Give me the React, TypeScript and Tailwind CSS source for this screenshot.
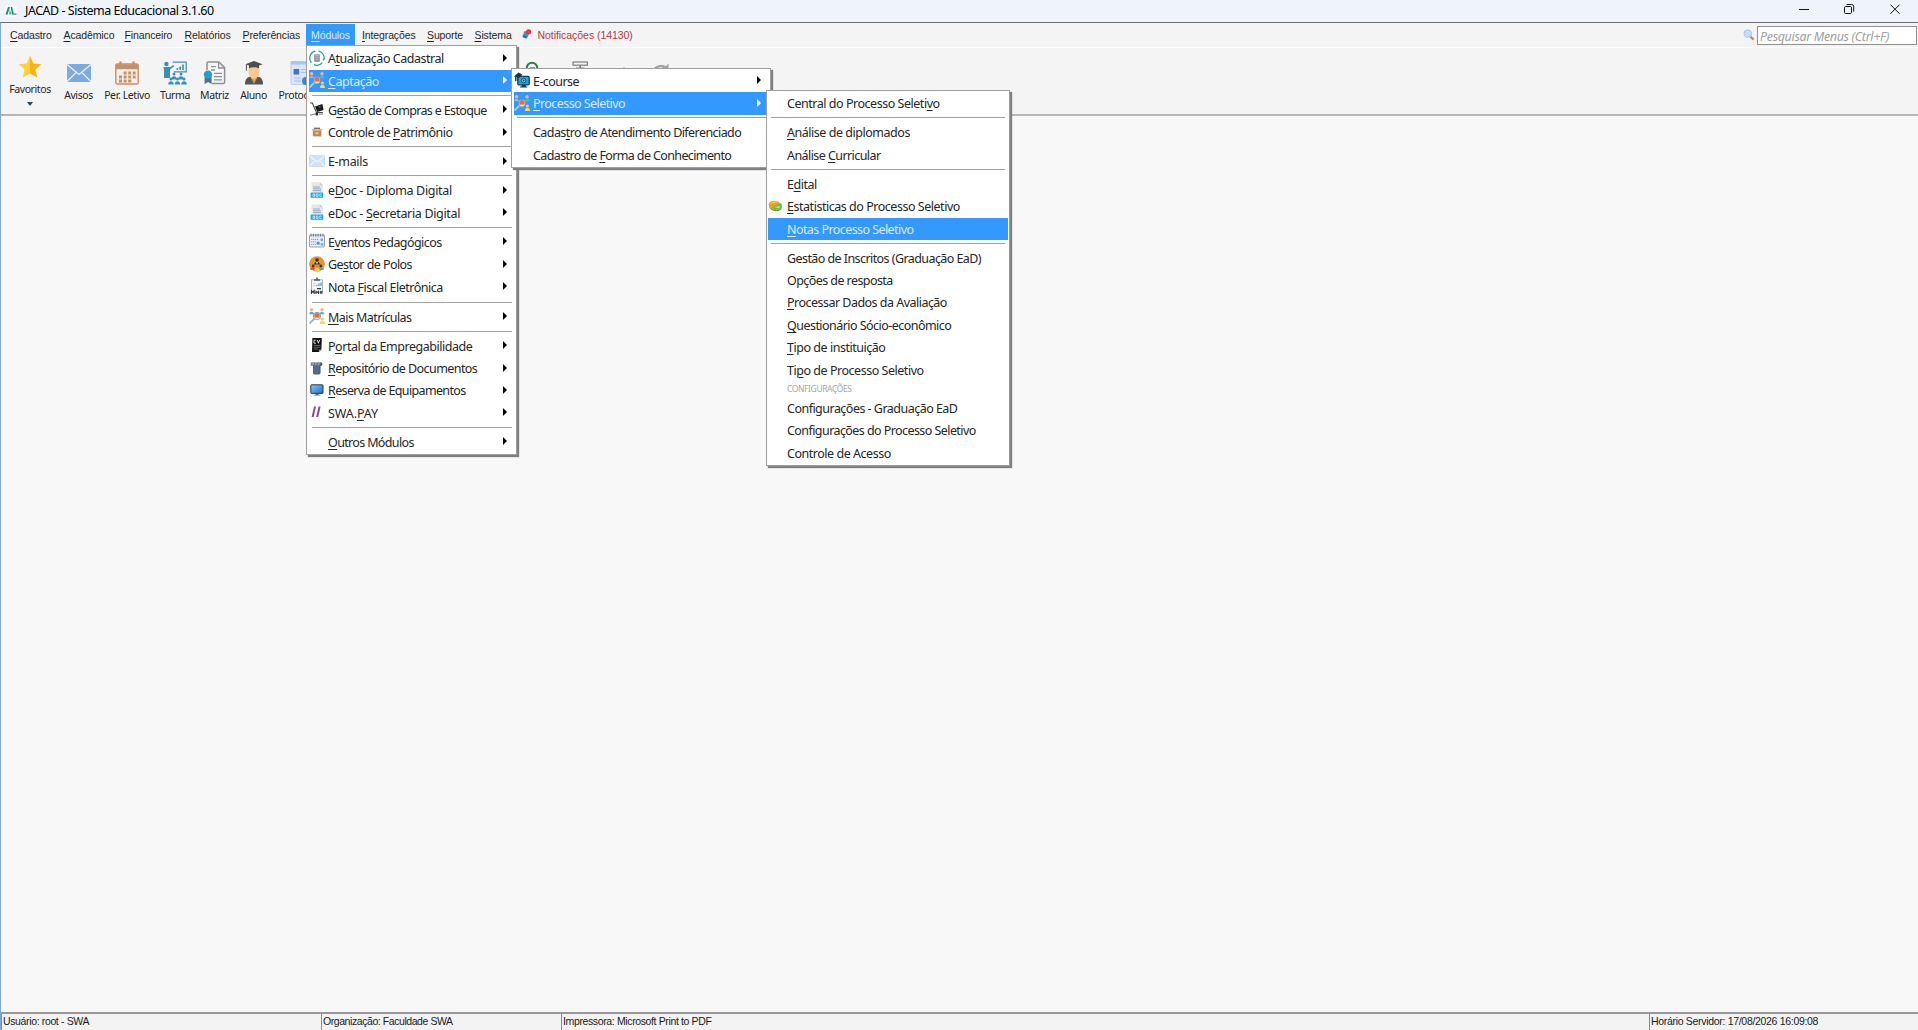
import type { ReactNode } from "react";

type Entry =
  | { kind?: "item"; label: string; icon?: ReactNode; arrow?: boolean; active?: boolean; tall?: boolean; track?: string }
  | { kind: "sep" }
  | { kind: "heading"; label: string };

/* "&" marks the mnemonic: the letter after it is underlined */
const Mnemonic = ({ text }: { text: string }) => {
  const at = text.indexOf("&");
  if (at < 0) return <>{text}</>;
  return (
    <>
      {text.slice(0, at)}
      <span className="underline decoration-1 underline-offset-2">{text[at + 1]}</span>
      {text.slice(at + 2)}
    </>
  );
};

const svg = "block size-4";

const RefreshDbIcon = () => (
  <svg viewBox="0 0 16 16" className={svg}>
    <path d="M9.4 .9A7.2 7.2 0 0 1 15 9.4M13.4 12.7A7.2 7.2 0 0 1 5 14.6M2.400 12.600A7.200 7.200 0 0 1 6.400 1" fill="none" stroke="#35a58c" strokeWidth="1.300" />
    <path d="M15.900 8.400l-1.100 2.600-1.500-2z" fill="#35a58c" />
    <path d="M5 5h6v6H5z" fill="#8d979b" />
    <ellipse cx="8" cy="5" rx="3" ry="1.200" fill="#aab3b6" />
    <ellipse cx="8" cy="11" rx="3" ry="1.100" fill="#8d979b" />
    <path d="M5 7.200h6M5 9.200h6" stroke="#c6ced0" strokeWidth=".6" />
  </svg>
);

const PeopleIcon = ({ blue }: { blue?: boolean }) => (
  <svg viewBox="0 0 16 16" className={svg}>
    <circle cx="2.6" cy="1.8" r="1.7" fill="#f6b48b" />
    <path d="M.2 6.200c0-3.400 4.800-3.400 4.800 0z" fill={blue ? "#3fa9dc" : "#8db9dc"} />
    <circle cx="13" cy="1.8" r="1.7" fill="#f6b48b" />
    <path d="M10.600 6.200c0-3.400 4.800-3.400 4.800 0z" fill="#42bfd2" />
    <circle cx="13.400" cy="11" r="1.600" fill="#f7c46f" />
    <path d="M10.800 16c0-4.200 5.200-4.200 5.200 0z" fill="#fbd84f" />
    <path d="M5.400 10.600L.6 15.400" stroke={blue ? "#7db8dd" : "#a9d0f2"} strokeWidth="1.800" />
    <circle cx="8" cy="8" r="3.700" fill="#dfe6ee" stroke="#5f7890" strokeWidth=".7" />
    <circle cx="8" cy="7.800" r="2.700" fill="#e0703c" />
    <path d="M5.500 10.400c1-1.300 4-1.300 5 0-1.300 1.300-3.700 1.300-5 0z" fill="#f5dccb" />
  </svg>
);

const CartIcon = () => (
  <svg viewBox="0 0 16 16" className={svg}>
    <path d="M1 2h2.4l4 9.5h6.4" fill="none" stroke="#4b4b4b" strokeWidth="1.2" />
    <path d="M6 5.500l7.400-2.600 1.200 6.200-6.400 2z" fill="#1b1b1b" />
    <path d="M9.600 4.400l1 2.200 1.600-.8" fill="none" stroke="#777" strokeWidth=".7" />
    <circle cx="7.800" cy="13" r="1.500" fill="#222" />
    <path d="M1 14.200l5-1.200M10 13h4" stroke="#777" strokeWidth="1" />
  </svg>
);

const BoxIcon = () => (
  <svg viewBox="0 0 16 16" className={svg}>
    <path d="M3.800 6.400h8.600v6H3.800z" fill="#b98a5e" />
    <path d="M3.800 6.800L2.600 5l5 .2.500 1.400.500-1.400 5-.2-1.200 1.800z" fill="#d6ad82" />
    <path d="M4.800 3.600h6.400v1.500H4.800z" fill="#8c6a4c" />
    <path d="M6.500 8.200h3v2h-3z" fill="#e4c7a5" />
  </svg>
);

const MailIcon = () => (
  <svg viewBox="0 0 16 16" className={svg}>
    <rect x=".3" y="2.800" width="15.400" height="10.600" fill="#cfe2f8" stroke="#aac8ea" strokeWidth=".5" />
    <path d="M.5 3l7.500 6 7.500-6M.5 13.200l5-5.400M15.500 13.200l-5-5.400" fill="none" stroke="#fff" strokeWidth="1" />
  </svg>
);

const DocIcon = () => (
  <svg viewBox="0 0 16 16" className={svg}>
    <path d="M2.400.3h8.400l3 3V11H2.400z" fill="#e6e9e4" />
    <path d="M10.800.3v3h3z" fill="#c7cec2" />
    <path d="M4 5h7M4 6.800h8M4 8.600h8" stroke="#8ba3cc" strokeWidth=".9" />
    <rect x="1.600" y="10.600" width="12.600" height="5.200" fill="#18a6ee" />
    <path d="M4 12h1.600v2.400H4zM7.200 12h1.800v2.400H7.200zM12.600 12h-1.800v2.400h1.800" fill="none" stroke="#d9f0fd" strokeWidth=".8" />
  </svg>
);

const EventsIcon = () => (
  <svg viewBox="0 0 16 16" className={svg}>
    <rect x=".5" y="2" width="15" height="12" rx="1" fill="#e7edf5" stroke="#8c98ab" strokeWidth=".9" />
    <path d="M2 .6v3M4.400.6v3M6.800.6v3M9.200.6v3M11.600.6v3M14 .6v3" stroke="#66728a" strokeWidth=".9" />
    <path d="M2 6.400h8M2 8.800h5M2 11.400h5" stroke="#8fa2bd" strokeWidth="1" strokeDasharray="1.300 .7" />
    <circle cx="12.800" cy="6.800" r="1.400" fill="#63a7da" />
    <circle cx="9.200" cy="10.200" r="1.600" fill="#4f94cf" />
    <circle cx="13" cy="11.200" r="1.500" fill="#74b2e0" />
  </svg>
);

const PolosIcon = () => (
  <svg viewBox="0 0 16 16" className={svg}>
    <circle cx="8" cy="8" r="7.800" fill="#e2952f" />
    <circle cx="8" cy="4" r="1.800" fill="#3b2a20" />
    <path d="M5.200 8.600c0-3.800 5.600-3.800 5.600 0z" fill="#2a2f3a" />
    <path d="M7.200 6h1.600L8 8.400z" fill="#fff" />
    <circle cx="4.200" cy="10" r="1.400" fill="#4a3222" />
    <circle cx="11.800" cy="10" r="1.400" fill="#4a3222" />
    <path d="M1 13.800c.2-3.400 5.400-3.400 6 0z" fill="#e0443a" />
    <path d="M9.400 13.800c.4-3.400 5.400-3.400 5.600 0z" fill="#5a8fe0" />
    <path d="M5.200 14c0-3 5.600-3 5.600 0l-1 1.700H6.200z" fill="#f4d13a" />
  </svg>
);

const InvoiceIcon = () => (
  <svg viewBox="0 0 16 18" className="block h-[18px] w-4">
    <rect x="2.500" y="2.800" width="11" height="12.600" fill="#f3f5f7" stroke="#9aa2a8" strokeWidth=".8" />
    <path d="M5 2.200h6v1.600H5zM7.200.6h1.600v2H7.200z" fill="#555f66" />
    <path d="M10 9V6.500M12 9V5.500M8 9V7.800" stroke="#3d9be0" strokeWidth="1.200" />
    <path d="M4.200 6.500h2.400M4.200 8.500h2.400" stroke="#9ec4e4" strokeWidth=".7" />
    <path d="M2.400 17v-3.400l1.400 1.600 1.400-1.600V17M7 17v-2.600l1.200 1 1.200-1V17M11 14l2.400 2.600M13.400 14L11 16.600M8 11.600h4" fill="none" stroke="#343a40" strokeWidth="1.100" />
  </svg>
);

const CvIcon = () => (
  <svg viewBox="0 0 16 16" className={svg}>
    <path d="M3.400 1h9.400l-.4 11.400L9.800 15H3z" fill="#111" />
    <path d="M6.900 3.200H5v3h1.900M8.400 3l1 3.200 1.200-3.200" fill="none" stroke="#eee" strokeWidth=".9" />
    <path d="M4.800 8.400h6.600M4.800 10.200h6.600M4.800 12h4" stroke="#999" strokeWidth=".6" />
    <path d="M9.800 15v-2.600h2.600z" fill="#999" />
  </svg>
);

const ScrollIcon = () => (
  <svg viewBox="0 0 16 16" className={svg}>
    <path d="M4 3h7.600v9.600c0 1-.6 1.800-1.600 1.800H5.400c-1 0-1.400-1-1.400-2z" fill="#4d6587" />
    <path d="M1.800 2.400h10v3.400h-10z" fill="#63799a" />
    <path d="M11.400 2.200c2.600 0 2.600 3.800 0 3.800z" fill="#3b5375" />
    <path d="M3 4h2M6 4h1.600M9 4h1.400" stroke="#c5d0df" strokeWidth=".8" />
    <path d="M5.600 8h4M5.600 10h4M5.600 12h3" stroke="#6b82a4" strokeWidth=".6" />
  </svg>
);

const MonitorIcon = () => (
  <svg viewBox="0 0 16 16" className={svg}>
    <defs>
      <linearGradient id="screen" x1="0" y1="0" x2="1" y2="1">
        <stop offset="0" stopColor="#8cc8f7" />
        <stop offset="1" stopColor="#1c6fc9" />
      </linearGradient>
    </defs>
    <rect x="1.800" y="2.800" width="12.200" height="8.600" rx=".6" fill="url(#screen)" stroke="#27384d" strokeWidth="1" />
    <path d="M6.600 11.600h2.800v1.200H6.600z" fill="#3b4654" />
    <path d="M4.800 12.800h6.400v.9H4.800z" fill="#7b8794" />
  </svg>
);

const SwaPayIcon = () => (
  <svg viewBox="0 0 16 16" className={svg}>
    <path d="M5 2.400h2L4.600 13h-2zM9.600 2.400h2L9.200 13h-2z" fill="#8d4696" />
  </svg>
);

const EcourseIcon = () => (
  <svg viewBox="0 0 16 16" className={svg}>
    <rect x="3.800" y="4.400" width="11.400" height="8.400" rx="1" fill="#1fa5d8" stroke="#123c5c" strokeWidth="1.300" />
    <path d="M0 4.600L4.400.6l4 2-3.600 3.600z" fill="#16344c" />
    <path d="M1.600 5v4.200M3.200 6.200v2.600" stroke="#16344c" strokeWidth="1.100" />
    <circle cx="9.600" cy="8.600" r="2.300" fill="#5cc6ea" stroke="#123c5c" strokeWidth=".8" />
    <path d="M9 7.400l1.800 1.200L9 9.800z" fill="#123c5c" />
    <path d="M7.600 13h4.200v1.400H7.600zM6 14.400h7.400v1.200H6z" fill="#123c5c" />
  </svg>
);

const StatsIcon = () => (
  <svg viewBox="0 0 16 16" className={svg}>
    <ellipse cx="7.400" cy="8.600" rx="6.400" ry="4.600" fill="#7d8a2a" transform="rotate(12 7.400 8.600)" />
    <ellipse cx="7" cy="7.400" rx="6.400" ry="4.500" fill="#e9a41f" transform="rotate(12 7 7.400)" />
    <path d="M5 8.600l8.400-2.200c1.400 3.600-1.600 6-5 6.200-2 0-3.400-1.400-3.400-4z" fill="#6cc04a" />
    <path d="M5.600 8l7.600-2.800c.4.800.5 1.600.3 2.400z" fill="#3db8a6" />
    <path d="M6.400 9l6.400-1-2 2.600z" fill="#c4e86e" />
    <path d="M2.400 6c1.400-1.800 4.200-2.200 6-1.800" fill="none" stroke="#f9d367" strokeWidth="1" />
  </svg>
);

const loose = "tracking-[-0.33px]";
const mid = "tracking-[-0.47px]";
const tight = "tracking-[-0.57px]";
const tighter = "tracking-[-0.65px]";

const modules: Entry[] = [
  { label: "A&tualização Cadastral", icon: <RefreshDbIcon />, arrow: true, track: mid },
  { label: "&Captação", icon: <PeopleIcon />, arrow: true, active: true, track: mid },
  { kind: "sep" },
  { label: "G&estão de Compras e Estoque", icon: <CartIcon />, arrow: true, track: tighter },
  { label: "Controle de &Patrimônio", icon: <BoxIcon />, arrow: true },
  { kind: "sep" },
  { label: "E-mails", icon: <MailIcon />, arrow: true, track: loose },
  { kind: "sep" },
  { label: "e&Doc - Diploma Digital", icon: <DocIcon />, arrow: true, track: loose },
  { label: "eDoc - &Secretaria Digital", icon: <DocIcon />, arrow: true, track: loose },
  { kind: "sep" },
  { label: "E&ventos Pedagógicos", icon: <EventsIcon />, arrow: true },
  { label: "Ge&stor de Polos", icon: <PolosIcon />, arrow: true },
  { label: "Nota &Fiscal Eletrônica", icon: <InvoiceIcon />, arrow: true, tall: true, track: mid },
  { kind: "sep" },
  { label: "&Mais Matrículas", icon: <PeopleIcon blue />, arrow: true },
  { kind: "sep" },
  { label: "P&ortal da Empregabilidade", icon: <CvIcon />, arrow: true, track: mid },
  { label: "&Repositório de Documentos", icon: <ScrollIcon />, arrow: true },
  { label: "&Reserva de Equipamentos", icon: <MonitorIcon />, arrow: true, track: tighter },
  { label: "SWA.&PAY", icon: <SwaPayIcon />, arrow: true, track: "tracking-[-0.1px]" },
  { kind: "sep" },
  { label: "&Outros Módulos", arrow: true, track: tighter },
];

const captacao: Entry[] = [
  { label: "E-course", icon: <EcourseIcon />, arrow: true },
  { label: "&Processo Seletivo", icon: <PeopleIcon />, arrow: true, active: true },
  { kind: "sep" },
  { label: "Cadas&tro de Atendimento Diferenciado" },
  { label: "Cadastro de &Forma de Conhecimento", track: "tracking-[-0.62px]" },
];

const processo: Entry[] = [
  { label: "Central do Processo Seleti&vo", track: mid },
  { kind: "sep" },
  { label: "&Análise de diplomados", track: mid },
  { label: "Análise &Curricular" },
  { kind: "sep" },
  { label: "E&dital", track: mid },
  { label: "&Estatisticas do Processo Seletivo", icon: <StatsIcon />, track: mid },
  { label: "&Notas Processo Seletivo", active: true },
  { kind: "sep" },
  { label: "Gestão de Inscritos (Graduação EaD)" },
  { label: "Opções de resposta" },
  { label: "&Processar Dados da Avaliação", track: "tracking-[-0.52px]" },
  { label: "&Questionário Sócio-econômico", track: "tracking-[-0.54px]" },
  { label: "&Tipo de instituição", track: mid },
  { label: "Ti&po de Processo Seletivo", track: mid },
  { kind: "heading", label: "CONFIGURAÇÕES" },
  { label: "Configurações - Graduação EaD", track: "tracking-[-0.52px]" },
  { label: "Configurações do Processo Seletivo" },
  { label: "Controle de Acesso", track: mid },
];

const PopupMenu = ({ entries, className }: { entries: Entry[]; className: string }) => (
  <div className={`absolute border border-[#a0a0a0] bg-white px-px shadow-[2px_2px_1px_#808080] ${className}`}>
    {entries.map((e, i) => {
      if (e.kind === "sep")
        return (
          <div key={i} className="h-[6.7px] px-[3px] pt-[2.400px]">
            <div className="h-px bg-[#a0a0a0]" />
          </div>
        );
      if (e.kind === "heading")
        return (
          <div key={i} className="h-[15.9px] pl-[19px] pt-px text-[8.5px] leading-[13px] tracking-[-0.4px] text-[#a5a5a5]">
            {e.label}
          </div>
        );
      return (
        <div
          key={i}
          className={`flex items-center pr-2 ${e.tall ? "h-[23.4px]" : "h-[22.4px]"} ${
            e.active ? "bg-[#3399ff] text-[#dcebfb]" : "text-[#262626]"
          }`}
        >
          <span className="mr-[3px] w-4 shrink-0 -translate-y-px">{e.icon}</span>
          <span className={`grow whitespace-nowrap pt-px text-[12.5px] leading-4 ${e.track ?? tight}`}>
            <Mnemonic text={e.label} />
          </span>
          {e.arrow && (
            <span
              className={`size-0 -translate-y-px border-y-4 border-l-4 border-y-transparent ${
                e.active ? "border-l-white" : "border-l-black"
              }`}
            />
          )}
        </div>
      );
    })}
  </div>
);

const TitleBar = () => (
  <header className="flex h-[22px] items-center bg-[#eff4fb] pl-[5px]">
    <span className="flex size-3 items-center justify-center rounded-sm bg-white">
      <svg viewBox="0 0 12 12" className="size-3">
        <path d="M3 2h2L2.600 9.600H.4zM5.600 2h1.600L9 9.600H7z" fill="#1f8f7c" />
        <path d="M4.800 4.600l1.800 5H4z" fill="#36b79f" />
        <path d="M8.600 8.600h3v1h-3z" fill="#555" />
      </svg>
    </span>
    <h1 className="ml-2 grow whitespace-nowrap text-[12.5px] leading-5 tracking-[-0.48px] text-black">
      JACAD - Sistema Educacional 3.1.60
    </h1>
    <svg viewBox="0 0 110 22" className="mr-[13px] h-[22px] w-[110px]" fill="none" stroke="#111" strokeWidth="1">
      <path d="M4 9.500h10" />
      <rect x="49.500" y="6.500" width="7" height="7" rx="1.200" />
      <path d="M51.500 4.500h5.200a2 2 0 0 1 2 2v5.200" />
      <path d="M95.400 4.600l9.200 9.200M104.600 4.600l-9.200 9.200" />
    </svg>
  </header>
);

const MenuBar = () => (
  <nav className="flex h-[25px] items-center border-b border-white bg-[#f4f4f4] pl-[9px] pr-px font-['Liberation_Sans',Arial,sans-serif] text-[10.5px] leading-3 tracking-[-0.12px] text-[#1f1f1f]">
    <span className="w-[53.5px]"><Mnemonic text="&Cadastro" /></span>
    <span className="w-[61px]"><Mnemonic text="&Acadêmico" /></span>
    <span className="w-[60px]"><Mnemonic text="&Financeiro" /></span>
    <span className="w-[58px]"><Mnemonic text="&Relatórios" /></span>
    <span className="w-[63.500px]"><Mnemonic text="&Preferências" /></span>
    <span className="mr-[7px] mt-px flex h-[21px] w-[49px] items-center justify-center self-start bg-[#3399ff] pt-px text-[#dcebfb]">
      <Mnemonic text="&Módulos" />
    </span>
    <span className="w-[65px]"><Mnemonic text="&Integrações" /></span>
    <span className="w-[47.500px]"><Mnemonic text="&Suporte" /></span>
    <span className="w-[47px]"><Mnemonic text="&Sistema" /></span>
    <svg viewBox="0 0 10 10" className="mb-0.5 size-[10px]">
      <path d="M2 2.200h4.500v4L4.800 9.400 1 8.200z" fill="#4a91c4" />
      <path d="M.8 5.400l4 1.800-.6 2.200L.6 8z" fill="#2f6f9f" />
      <circle cx="6.600" cy="2.800" r="2.600" fill="#e2393b" />
    </svg>
    <span className="ml-[6px] grow text-[10.5px] tracking-[-0.05px] text-[#bb3540]">Notificações (14130)</span>
    <svg viewBox="0 0 12 12" className="size-3">
      <path d="M7.400 7.600l3.200 3" stroke="#c98a4a" strokeWidth="2.200" />
      <circle cx="4.800" cy="4.600" r="3.800" fill="#bfe0fb" stroke="#a8c6ea" strokeWidth="1" />
    </svg>
    <div className="ml-[2px] flex h-[19px] w-[160px] items-center overflow-hidden border border-[#8f8f8f] bg-white pl-[2px] pt-1 font-['Noto_Sans','Open_Sans',sans-serif] text-[12.500px] italic tracking-[-0.340px] whitespace-nowrap text-[#a0a0a0]">
      Pesquisar Menus (Ctrl+F)
    </div>
  </nav>
);

const ToolButton = ({ label, className, children }: { label: string; className: string; children: ReactNode }) => (
  <div className={`flex shrink-0 flex-col items-center pt-[13px] ${className}`}>
    <svg viewBox="0 0 24 24" className="size-6">{children}</svg>
    <span className="mt-[2px] whitespace-nowrap text-[10.5px] leading-4 tracking-[-0.400px] text-[#262626]">{label}</span>
  </div>
);

const Person = ({ x, y }: { x: number; y: number }) => (
  <g>
    <circle cx={x} cy={y - 1.5} r="1.5" />
    <path d={`M${x - 2.8} ${y + 4}c0-4.4 5.6-4.4 5.6 0z`} />
  </g>
);

const Toolbar = () => (
  <div className="flex h-[68px] gap-[13px] border-b-2 border-[#b5b5b5] bg-[#f4f4f4] pl-[10px]">
    <div className="mr-[3px] flex w-[38px] flex-col items-center pt-[7px]">
      <svg viewBox="0 0 24 24" className="size-6">
        <path d="M12 .8l3.400 7.600 8 .8-6 5.400 1.800 8L12 18.400z" fill="#f8b417" />
        <path d="M12 .8L8.600 8.400l-8 .8 6 5.400-1.800 8L12 18.400z" fill="#fdd23a" />
      </svg>
      <span className="mt-[2px] whitespace-nowrap text-[10.500px] leading-4 tracking-[-0.400px] text-[#262626]">Favoritos</span>
      <span className="mt-[5px] size-0 border-x-[3.5px] border-t-4 border-x-transparent border-t-[#2d4454]" />
    </div>
    <ToolButton label="Avisos" className="w-[27px]">
      <path d="M0 3h24v18H0z" fill="#7fabdc" />
      <path d="M0 3.400l12 10 12-10M0 20.600l9-9M24 20.600l-9-9" fill="none" stroke="#f1f6fb" strokeWidth="1.200" />
    </ToolButton>
    <ToolButton label="Per. Letivo" className="w-[44px]">
      <rect x=".8" y="3" width="22.400" height="20" rx="1.600" fill="#f7efe8" stroke="#c78f65" strokeWidth="1.400" />
      <path d="M.8 3.400h22.400v4.800H.8z" fill="#c78f65" />
      <path d="M5.500.6v5M18.500.6v5" stroke="#c78f65" strokeWidth="2.400" />
      <path d="M8.600 12h12M4 16h16.600M4 20h12.400" stroke="#c78f65" strokeWidth="2.800" strokeDasharray="3 1.600" />
    </ToolButton>
    <ToolButton label="Turma" className="w-[26px]">
      <g fill="#3b8fbb">
        <circle cx="3.400" cy="3" r="2.200" />
        <path d="M.4 6h7l3-2 .8 1.200L7 8.600V17H1V9z" />
        <path d="M9.600 1.200h13.600v9.600H10.800" fill="none" stroke="#3b8fbb" strokeWidth="1.200" />
        <path d="M13.600 9V7h1.600v2zM16.400 9V5.400H18V9zM19.200 9V3.400h1.600V9z" />
        <Person x={11} y={14.6} />
        <Person x={18} y={14.6} />
        <Person x={8} y={19.6} />
        <Person x={14.5} y={19.6} />
        <Person x={21} y={19.6} />
      </g>
    </ToolButton>
    <ToolButton label="Matriz" className="w-[27px]">
      <path d="M4 9V2.400C4 1.600 4.600 1 5.400 1H16l5.600 5.600v14.600c0 .8-.6 1.400-1.400 1.400H9" fill="#f7f7f7" stroke="#8a9095" strokeWidth="1.500" />
      <path d="M15.600 1v6h6" fill="none" stroke="#8a9095" strokeWidth="1.400" />
      <path d="M8 5.600h5M8 9h4M11 12.400h8M11 15.600h8M11 18.800h8" stroke="#8a9095" strokeWidth="1.300" />
      <path d="M1.600 16h7v7l-3.500-2-3.500 2z" fill="#5b6d78" />
      <circle cx="5" cy="13.600" r="4.200" fill="#1fa0cf" />
    </ToolButton>
    <ToolButton label="Aluno" className="w-[25px]">
      <path d="M3 23.400c0-6 3-7.400 6-7.800h6c3 .4 6 1.800 6 7.800z" fill="#51565b" />
      <path d="M9 14h6v3l-3 4-3-4z" fill="#eeb574" />
      <path d="M9.200 17l2.800 6 2.800-6-2.800 2z" fill="#e6943b" />
      <path d="M6.600 6h10.800v5.400c0 3-2.600 6-5.400 6s-5.400-3-5.400-6z" fill="#fac88c" />
      <path d="M12 0l8.600 3.200-3.600 1.400v2.600c-3-1.400-7-1.400-10 0V4.600L3.400 3.200z" fill="#4a4f53" />
      <path d="M4.400 3.600v6" stroke="#4a4f53" strokeWidth="1" />
    </ToolButton>
    <ToolButton label="Protocolo" className="w-[43px]">
      <rect x="2" y="0" width="20" height="23.600" rx="1" fill="#dbe7f8" stroke="#b5cdf0" strokeWidth="1" />
      <path d="M2 0h20v3.600H2z" fill="#a9c6f0" />
      <rect x="4.600" y="8" width="5.600" height="5.600" fill="#3f74c8" />
      <path d="M12 8.600h8M12 11.400h8M5 17h7M5 20h7" stroke="#a3bfe8" strokeWidth="1" />
      <circle cx="17" cy="20" r="4" fill="#3a87c7" />
    </ToolButton>
    <svg viewBox="0 0 160 30" className="ml-[188px] mt-[11px] h-[30px] w-[160px] shrink-0" fill="none">
      <circle cx="9" cy="9" r="5.200" stroke="#2c7f4b" strokeWidth="2" />
      <path d="M7 9h5" stroke="#2c7f4b" strokeWidth="1.400" />
      <rect x="50" y="3" width="14.400" height="3.200" stroke="#7c7c7c" strokeWidth="1.200" />
      <path d="M57.200 6v12M53 9.400h8.400" stroke="#7c7c7c" strokeWidth="1.600" />
      <path d="M99.400 10.400l1.600-2.400 1.600 2.400z" fill="#777" />
      <path d="M131 12a7 6 0 0 1 12-3" stroke="#a3a3a3" strokeWidth="2.400" />
      <path d="M145.600 4.600v6h-6z" fill="#a3a3a3" />
    </svg>
  </div>
);

const StatusBar = () => (
  <footer className="flex h-[18px] border-t-2 border-[#979797] bg-[#f3f3f3] font-['Liberation_Sans',Arial,sans-serif] text-[10.500px] leading-[15px] whitespace-nowrap text-[#1a1a1a]">
    <span className="w-[320px] border-l border-[#8a8a8a] pl-px tracking-[-0.360px]">Usuário: root - SWA</span>
    <span className="w-[240px] border-l border-[#8a8a8a] pl-px tracking-[-0.430px]">Organização: Faculdade SWA</span>
    <span className="grow border-l border-[#8a8a8a] pl-px tracking-[-0.370px]">Impressora: Microsoft Print to PDF</span>
    <span className="w-[269px] border-l border-[#8a8a8a] pl-px tracking-[-0.310px]">Horário Servidor: 17/08/2026 16:09:08</span>
  </footer>
);

export default function App() {
  return (
    <div className="relative flex h-[1030px] w-[1918px] flex-col overflow-hidden bg-[#f8f8f8] font-['Noto_Sans','Open_Sans',sans-serif]">
      <TitleBar />
      <div className="flex min-h-0 grow flex-col border-l border-t border-l-[#7fa9cf] border-t-[#6f6f6f]">
        <MenuBar />
        <Toolbar />
        <main className="grow bg-[#f8f8f8]" />
        <StatusBar />
      </div>
      <PopupMenu entries={modules} className="left-[306px] top-[45px] h-[410px] w-[211px] pl-[2px] pt-[1.5px]" />
      <PopupMenu entries={captacao} className="left-[511px] top-[68px] h-[100px] w-[260px] pl-[2px] pt-[1px]" />
      <PopupMenu entries={processo} className="left-[766px] top-[90px] h-[376px] w-[244px] pt-[1.5px]" />
    </div>
  );
}
